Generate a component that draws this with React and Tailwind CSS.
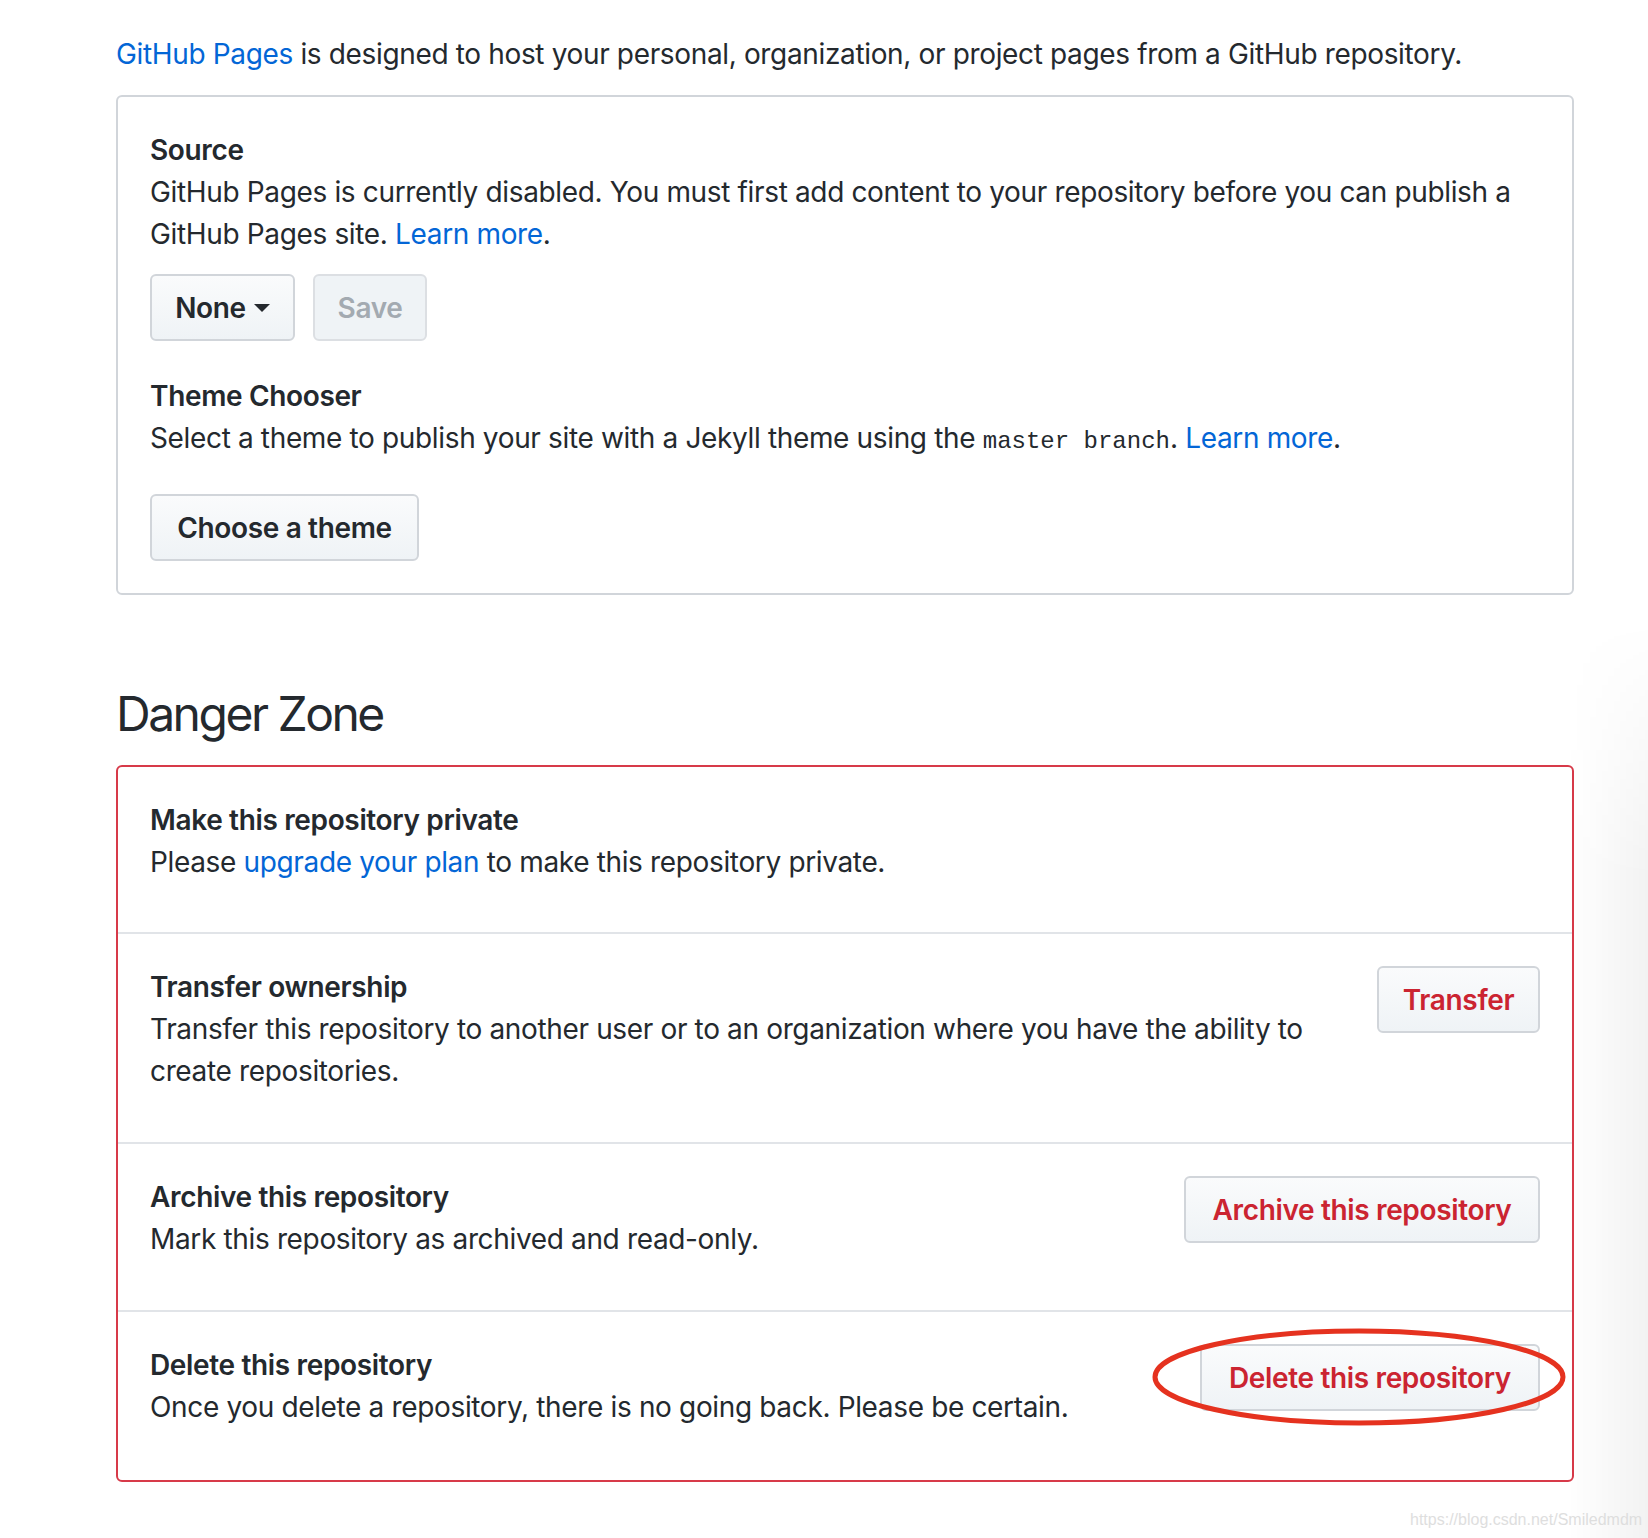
export default function App() {
  const btn =
    'h-[67px] rounded-[6px] border-2 border-[#d1d5da] bg-gradient-to-b from-[#fafbfc] to-[#eff3f6] text-[28px] font-semibold leading-[40px] flex items-center justify-center shrink-0';

  return (
    <div className="relative w-[1648px] h-[1538px] overflow-hidden bg-white text-[#24292e] font-['Inter','Noto_Sans',sans-serif] text-[28px] leading-[42px] tracking-[-0.35px]">
      {/* shadow on the right edge */}
      <div className="absolute right-0 top-[620px] bottom-0 w-[80px] bg-[linear-gradient(to_right,rgba(0,0,0,0),rgba(0,0,0,0.05))] [mask-image:linear-gradient(to_bottom,transparent,black_260px)]" />

      <div className="pl-[116px] pt-[33px] w-[1574px]">
        <p>
          <span className="text-[#0366d6]">GitHub Pages</span> is designed to host your personal, organization, or project pages from a GitHub repository.
        </p>

        {/* Pages box */}
        <div className="mt-[20px] rounded-[6px] border-2 border-[#d1d5da] px-8 pt-8 pb-8">
          <h3 className="font-semibold">Source</h3>
          <p>
            GitHub Pages is currently disabled. You must first add content to your repository before you can publish a GitHub Pages site.{' '}
            <span className="text-[#0366d6]">Learn more</span>.
          </p>
          <div className="mt-[19px] flex gap-[18px]">
            <div className={`${btn} w-[145px]`}>
              <span>None</span>
              <svg width="16" height="10" viewBox="0 0 16 10" className="ml-[8px] mt-[2px]">
                <path d="M0 0h16L8 8z" fill="#24292e" />
              </svg>
            </div>
            <div className="h-[67px] w-[114px] rounded-[6px] border-2 border-[#dcdfe3] bg-[#eff3f6] text-[28px] font-semibold leading-[40px] text-[#a3aab1] flex items-center justify-center">
              Save
            </div>
          </div>

          <h3 className="mt-[34px] font-semibold">Theme Chooser</h3>
          <p>
            Select a theme to publish your site with a Jekyll theme using the{' '}
            <code className="font-['Liberation_Mono','DejaVu_Sans_Mono',monospace] text-[24px] leading-none tracking-normal">master branch</code>.{' '}
            <span className="text-[#0366d6]">Learn more</span>.
          </p>
          <div className={`${btn} mt-[35px] w-[269px]`}>Choose a theme</div>
        </div>

        <h2 className="mt-[89px] text-[48px] leading-[60px] font-normal tracking-[-2.5px]">Danger Zone</h2>

        {/* Danger box */}
        <div className="mt-[21px] rounded-[6px] border-2 border-[#d73a49]">
          <div className="px-8 pt-8 pb-[49px]">
            <h4 className="font-semibold">Make this repository private</h4>
            <p>
              Please <span className="text-[#0366d6]">upgrade your plan</span> to make this repository private.
            </p>
          </div>

          <div className="border-t-2 border-[#e1e4e8] px-8 pt-8 pb-[50px] flex justify-between gap-8">
            <div className="flex-1 min-w-0">
              <h4 className="font-semibold">Transfer ownership</h4>
              <p>Transfer this repository to another user or to an organization where you have the ability to create repositories.</p>
            </div>
            <div className={`${btn} w-[163px] text-[#cb2431]`}>Transfer</div>
          </div>

          <div className="border-t-2 border-[#e1e4e8] px-8 pt-8 pb-[50px] flex justify-between gap-8">
            <div className="flex-1 min-w-0">
              <h4 className="font-semibold">Archive this repository</h4>
              <p>Mark this repository as archived and read-only.</p>
            </div>
            <div className={`${btn} w-[356px] text-[#cb2431]`}>Archive this repository</div>
          </div>

          <div className="border-t-2 border-[#e1e4e8] px-8 pt-8 pb-[52px] flex justify-between gap-8">
            <div className="flex-1 min-w-0">
              <h4 className="font-semibold">Delete this repository</h4>
              <p>Once you delete a repository, there is no going back. Please be certain.</p>
            </div>
            <div className={`${btn} w-[340px] text-[#cb2431]`}>Delete this repository</div>
          </div>
        </div>
      </div>

      {/* hand-drawn red ellipse */}
      <svg className="absolute left-[1150px] top-[1326px]" width="420" height="104" viewBox="0 0 420 104">
        <ellipse cx="209" cy="51" rx="204" ry="46" fill="none" stroke="#e5321f" strokeWidth="5" />
      </svg>

      {/* watermark */}
      <div className="absolute left-[1410px] top-[1510px] text-[16px] leading-[20px] tracking-normal text-[#dedede] font-['Liberation_Sans',Arial,sans-serif]">
        https://blog.csdn.net/Smiledmdm
      </div>
    </div>
  );
}
